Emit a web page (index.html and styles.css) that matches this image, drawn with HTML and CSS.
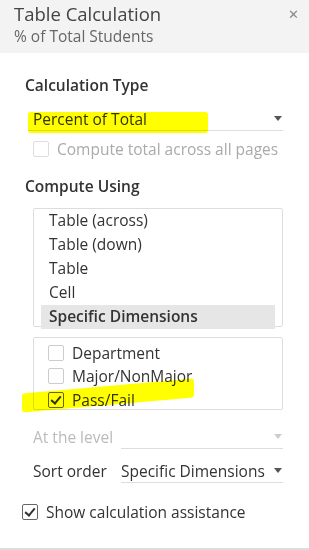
FILE: index.html
```html
<!DOCTYPE html>
<html lang="en">
<head>
    <meta charset="UTF-8">
    <meta name="viewport" content="width=device-width, initial-scale=1.0">
    <title>Table Calculation</title>
    <link rel="stylesheet" href="styles.css">
</head>
<body>
    <div class="panel">
        <header class="panel-head">
            <div>
                <div class="title">Table Calculation</div>
                <div class="subtitle">% of Total Students</div>
            </div>
            <span class="close">&#x2715;</span>
        </header>

        <section class="body">
            <h2>Calculation Type</h2>
            <div class="select wide">
                <span>Percent of Total</span>
                <span class="caret"></span>
            </div>
            <label class="check disabled">
                <span class="box"></span>
                Compute total across all pages
            </label>

            <h2 class="compute">Compute Using</h2>
            <ul class="listbox">
                <li>Table (across)</li>
                <li>Table (down)</li>
                <li>Table</li>
                <li>Cell</li>
                <li class="selected">Specific Dimensions</li>
            </ul>

            <ul class="dims">
                <li><span class="box"></span>Department</li>
                <li><span class="box"></span>Major/NonMajor</li>
                <li><span class="box checked"></span>Pass/Fail</li>
            </ul>

            <div class="field disabled">
                <span class="field-label">At the level</span>
                <div class="select">
                    <span></span>
                    <span class="caret"></span>
                </div>
            </div>
            <div class="field">
                <span class="field-label">Sort order</span>
                <div class="select">
                    <span>Specific Dimensions</span>
                    <span class="caret"></span>
                </div>
            </div>

            <label class="check assist">
                <span class="box checked"></span>
                Show calculation assistance
            </label>
        </section>

        <!-- highlighter marks -->
        <div class="mark mark-one"></div>
        <div class="mark mark-two"></div>
    </div>
</body>
</html>
```

FILE: styles.css
```css
* {
    box-sizing: border-box;
}
body {
    margin: 0;
    font-family: "Open Sans", "Liberation Sans", sans-serif;
    color: #333;
    background: #fff;
}
.panel {
    position: relative;
    width: 309px;
    height: 550px;
    border-bottom: 2px solid #ddd;
    overflow: hidden;
}
.panel-head {
    display: flex;
    justify-content: space-between;
    background: #f3f3f3;
    height: 53px;
    padding: 3px 10px 0 14px;
}
.title {
    font-size: 18.5px;
    color: #444;
    line-height: 22px;
}
.subtitle {
    font-size: 15.5px;
    color: #666;
    line-height: 20px;
    margin-top: 1px;
}
.close {
    color: #888;
    font-size: 13px;
    margin-top: 2px;
}
.body {
    padding: 22px 26px 0 25px;
}
h2 {
    font-size: 15.5px;
    font-weight: 600;
    margin: 0;
    line-height: 20px;
}
.select {
    display: flex;
    justify-content: space-between;
    align-items: center;
    border-bottom: 1px solid #ddd;
    height: 24px;
    font-size: 15.5px;
    white-space: nowrap;
}
.select.wide {
    margin: 12px 0 0 3px;
    padding: 0 0 0 5px;
}
.caret {
    width: 0;
    height: 0;
    border-left: 4px solid transparent;
    border-right: 4px solid transparent;
    border-top: 5px solid #555;
    margin-right: 1px;
}
.check {
    display: flex;
    align-items: center;
    gap: 8px;
    font-size: 15.5px;
    line-height: 20px;
    white-space: nowrap;
}
.check.disabled {
    color: #aaa;
    margin: 8px 0 0 8px;
}
.box {
    width: 16px;
    height: 16px;
    border: 1px solid #ccc;
    border-radius: 2px;
    background: #fff;
    position: relative;
    flex: none;
}
.disabled .box {
    border-color: #ddd;
}
.box.checked {
    border-color: #666;
}
.box.checked::after {
    content: "";
    position: absolute;
    left: 4px;
    top: 1px;
    width: 4px;
    height: 8px;
    border: solid #333;
    border-width: 0 2px 2px 0;
    transform: rotate(40deg);
}
h2.compute {
    margin-top: 17px;
}
.listbox {
    list-style: none;
    margin: 12px 0 0 8px;
    padding: 0 7px 0 7px;
    border: 1px solid #ddd;
    border-radius: 2px;
    height: 119px;
}
.listbox li {
    font-size: 15.5px;
    height: 24px;
    line-height: 23px;
    padding-left: 8px;
    white-space: nowrap;
}
.listbox li.selected {
    background: #e6e6e6;
    font-weight: 600;
}
.dims {
    list-style: none;
    margin: 10px 0 0 8px;
    padding: 3px 0 0 14px;
    border: 1px solid #ddd;
    border-radius: 2px;
    height: 73px;
}
.dims li {
    display: flex;
    align-items: center;
    gap: 8px;
    height: 23.5px;
    font-size: 15.5px;
}
.field {
    display: flex;
    align-items: center;
    margin: 15px 0 0 8px;
    font-size: 15.5px;
}
.field + .field {
    margin-top: 10px;
}
.field-label {
    width: 88px;
    flex: none;
    white-space: nowrap;
}
.field .select {
    flex: 1;
}
.field.disabled {
    color: #bbb;
}
.field.disabled .caret {
    border-top-color: #ccc;
}
.check.assist {
    margin: 19px 0 0 -3px;
}
.mark {
    position: absolute;
    background: #ffff00;
    mix-blend-mode: multiply;
}
.mark-one {
    left: 28px;
    top: 112px;
    width: 180px;
    height: 21px;
    border-radius: 3px;
}
.mark-two {
    left: 22px;
    top: 386px;
    width: 172px;
    height: 19px;
    border-radius: 3px;
    transform: skewY(-5deg);
}
```
